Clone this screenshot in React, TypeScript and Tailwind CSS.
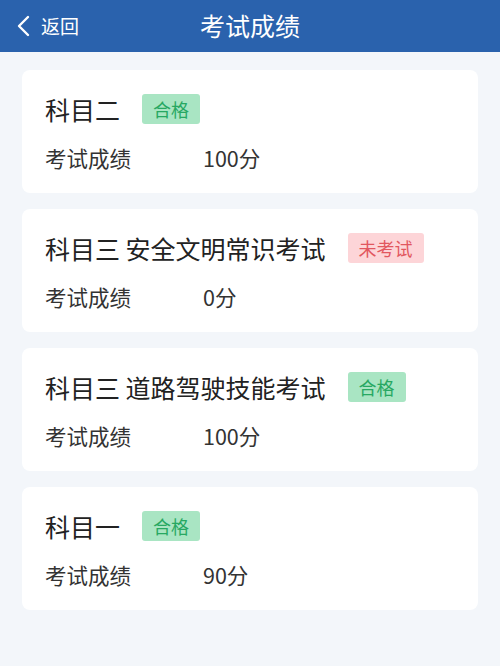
const records = [
  { name: "科目二", status: "pass", score: "100分" },
  { name: "科目三 安全文明常识考试", status: "none", score: "0分" },
  { name: "科目三 道路驾驶技能考试", status: "pass", score: "100分" },
  { name: "科目一", status: "pass", score: "90分" },
];

function StatusBadge({ status }: { status: string }) {
  if (status === "pass") {
    return (
      <span className="ml-[22px] flex h-[30px] items-center rounded-[3px] bg-[#a9e5c3] px-[11px] text-[18px] text-[#27a862]">
        合格
      </span>
    );
  }
  return (
    <span className="ml-[22px] flex h-[30px] items-center rounded-[3px] bg-[#fdd5d8] px-[11px] text-[18px] text-[#e2575f]">
      未考试
    </span>
  );
}

export default function App() {
  return (
    <div
      className="flex h-[666px] w-[500px] flex-col bg-[#f3f6fa]"
      style={{ fontFamily: '"Noto Sans CJK SC", "Noto Sans", sans-serif' }}
    >
      <div className="relative flex h-[52px] items-center justify-center bg-[#2a62ad] text-white">
        <div className="absolute left-[15px] top-0 flex h-full items-center gap-[8px]">
          <svg width="18" height="24" viewBox="0 0 18 24" fill="none">
            <path d="M13 3L4 12l9 9" stroke="white" strokeWidth="2.4" strokeLinecap="round" strokeLinejoin="round" />
          </svg>
          <span className="text-[19px]">返回</span>
        </div>
        <span className="text-[25px]">考试成绩</span>
      </div>

      <div className="flex flex-col gap-[16px] px-[22px] pt-[18px]">
        {records.map((r) => (
          <div key={r.name} className="rounded-[8px] bg-white px-[23px] pb-[21px] pt-[24px]">
            <div className="flex h-[30px] items-center">
              <span className="text-[25px] leading-[30px] text-[#222]">{r.name}</span>
              <StatusBadge status={r.status} />
            </div>
            <div className="mt-[20px] flex h-[28px] items-center text-[21.5px] text-[#333]">
              <span className="w-[158px]">考试成绩</span>
              <span>{r.score}</span>
            </div>
          </div>
        ))}
      </div>
    </div>
  );
}
